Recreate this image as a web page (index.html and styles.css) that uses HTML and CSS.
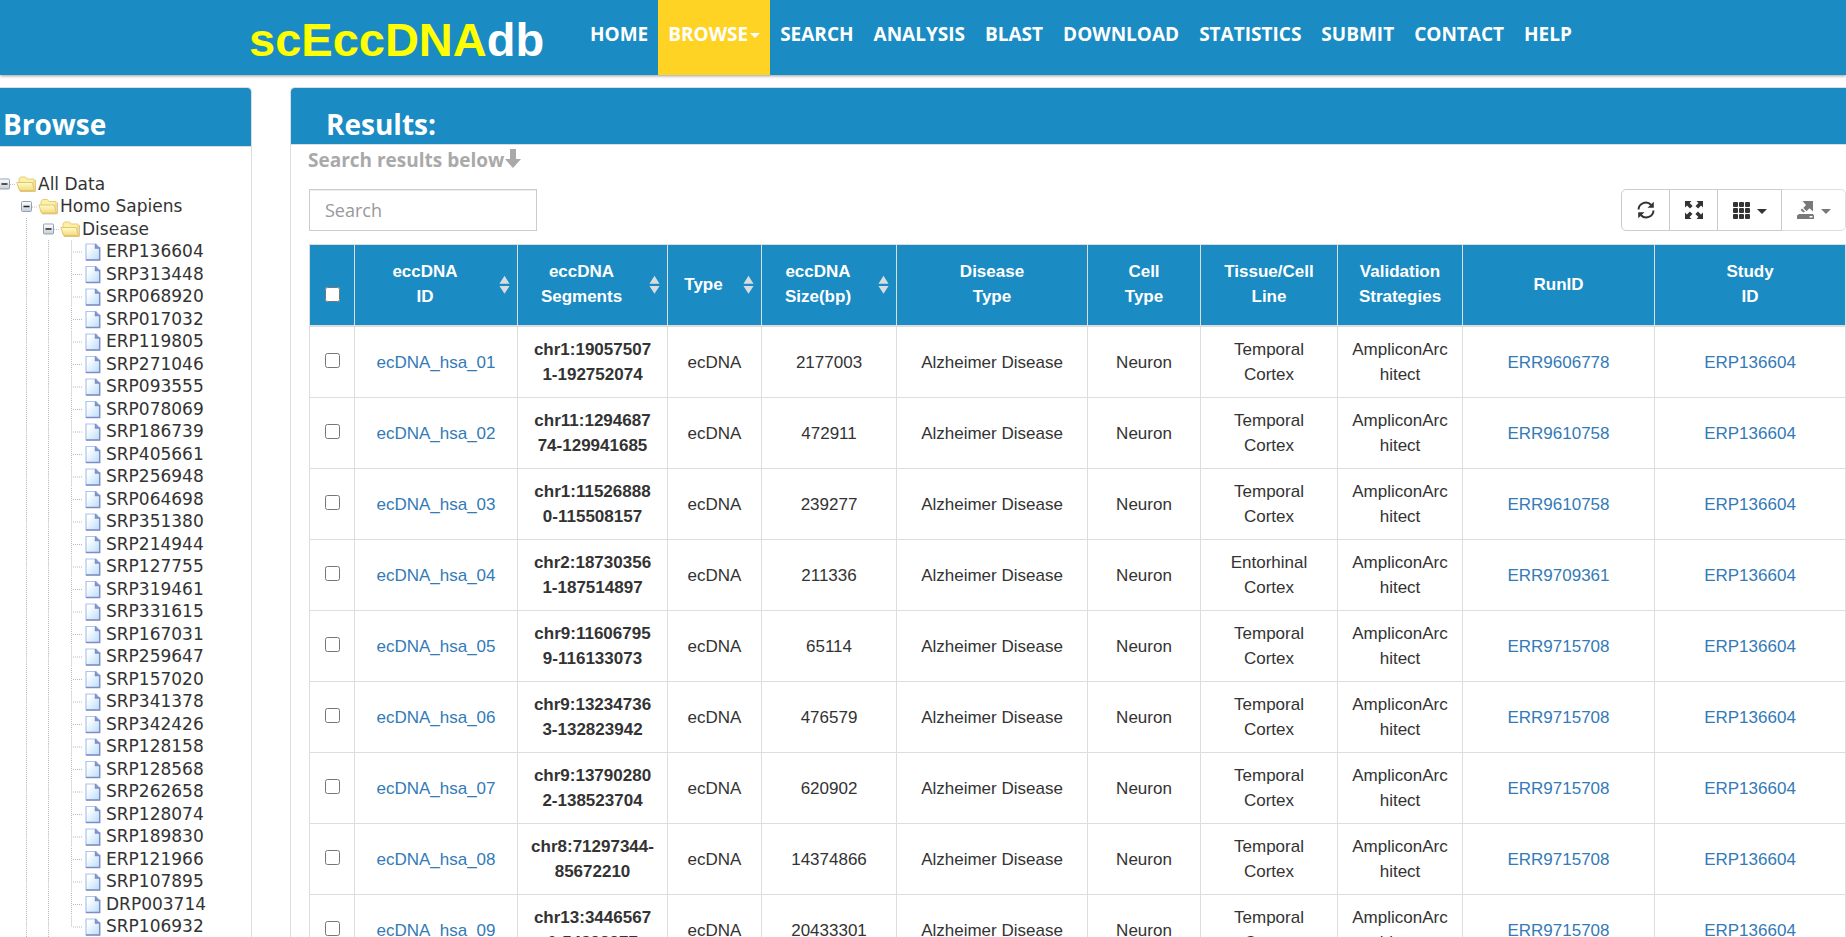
FILE: index.html
```html
<!DOCTYPE html>
<html lang="en">
<head>
    <meta charset="UTF-8">
    <meta name="viewport" content="width=device-width, initial-scale=1.0">
    <title>scEccDNAdb - Browse</title>
    <link rel="stylesheet" href="styles.css">
</head>
<body>
    <!-- icon definitions -->
    <svg class="sprite" aria-hidden="true">
        <defs>
            <linearGradient id="paper" x1="0" y1="0" x2="1" y2="1">
                <stop offset="0.2" stop-color="#ffffff"/>
                <stop offset="1" stop-color="#b9dcfb"/>
            </linearGradient>
            <linearGradient id="gold" x1="0" y1="0" x2="0" y2="1">
                <stop offset="0" stop-color="#fffbd0"/>
                <stop offset="1" stop-color="#f3dc78"/>
            </linearGradient>
            <linearGradient id="steel" x1="0" y1="0" x2="0" y2="1">
                <stop offset="0" stop-color="#ffffff"/>
                <stop offset="1" stop-color="#c9cdd2"/>
            </linearGradient>
        </defs>
        <symbol id="i-minus" viewBox="0 0 22 22">
            <path d="M16 11.5h6" stroke="#c4c4c4" stroke-dasharray="1 1"/>
            <rect x="5.5" y="6" width="10" height="10" rx="1" fill="url(#steel)" stroke="#8ea3ba"/>
            <path d="M7.500 11h6" stroke="#222" stroke-width="1.500"/>
        </symbol>
        <symbol id="i-folder" viewBox="0 0 22 22">
            <path d="M3 16V6l1.500-2h5l1.500 2h7v11H4z" fill="#fbf0a4" stroke="#e6cd78"/>
            <path d="M.8 9.500h15.500l2 8H3.500z" fill="url(#gold)" stroke="#e3c76e"/>
            <path d="M19.300 7v11.300H4" fill="none" stroke="#d6b866"/>
        </symbol>
        <symbol id="i-file" viewBox="0 0 22 22">
            <path d="M4 3.500h10l3.500 4v12H4z" fill="url(#paper)" stroke="#a9c4ee" stroke-width="1.200"/>
            <path d="M13.500 3.500v4h4.200v12H4" fill="none" stroke="#7f8cc0" stroke-width="1.400"/>
            <path d="M13.500 3.500l4 4h-4z" fill="#7f93cf"/>
        </symbol>
        <symbol id="i-line" viewBox="0 0 22 22" preserveAspectRatio="none">
            <path d="M10.500 0v22" stroke="#b8b8b8" stroke-dasharray="1 1"/>
        </symbol>
        <symbol id="i-join" viewBox="0 0 22 22">
            <path d="M11.500 0v22M13 11.500h9" stroke="#b8b8b8" stroke-dasharray="1 1"/>
        </symbol>
        <symbol id="i-joinbottom" viewBox="0 0 22 22">
            <path d="M11.500 0v11M13 11.500h9" stroke="#b8b8b8" stroke-dasharray="1 1"/>
        </symbol>
        <symbol id="i-sort" viewBox="0 0 12 20">
            <path d="M6 0l5.500 8.500H.5zM6 19.500L.5 11h11z" fill="#d9dde0"/>
        </symbol>
    </svg>

    <header class="navbar">
        <a class="logo" href="#">scEccDNA<span>db</span></a>
        <nav class="menu">
            <a href="#">HOME</a>
            <a href="#" class="active">BROWSE<i class="caret"></i></a>
            <a href="#">SEARCH</a>
            <a href="#">ANALYSIS</a>
            <a href="#">BLAST</a>
            <a href="#">DOWNLOAD</a>
            <a href="#">STATISTICS</a>
            <a href="#">SUBMIT</a>
            <a href="#">CONTACT</a>
            <a href="#">HELP</a>
        </nav>
    </header>

    <main class="content">
        <aside class="panel sidebar">
            <h2 class="panel-heading">Browse</h2>
            <div class="tree" id="tree"></div>
        </aside>

        <section class="panel results">
            <h2 class="panel-heading">Results:</h2>
            <div class="panel-body">
                <h4 class="hint">Search results below<svg width="16" height="20" viewBox="0 0 16 20"><path d="M5 0h6v10h5L8 19 0 10h5z" fill="#a9a9a9"/></svg></h4>
                <div class="toolbar">
                    <input type="text" class="search" placeholder="Search" aria-label="Search">
                    <div class="btn-group">
                        <button class="btn" title="Refresh">
                            <svg width="18" height="18" viewBox="0 0 18 18"><path d="M1.500 8.500A7.300 7.300 0 0 1 14 3.800M16.500 9.500A7.300 7.300 0 0 1 4 14.200" fill="none" stroke="#333" stroke-width="2"/><path d="M16.800.8v6h-6.300zM1.200 17.200v-6h6.300z" fill="#333"/></svg>
                        </button>
                        <button class="btn" title="Fullscreen">
                            <svg width="18" height="18" viewBox="0 0 18 18"><path d="M0 0h6.500L4.600 1.900l3 3L5 7.500l-3-3-2 2zM18 0v6.500l-1.900-1.900-3 3L10.500 5l3-3-2-2zM0 18v-6.500l1.900 1.900 3-3L7.500 13l-3 3 2 2zM18 18h-6.500l1.900-1.900-3-3 2.600-2.600 3 3 2-2z" fill="#333"/></svg>
                        </button>
                        <button class="btn" title="Columns">
                            <svg width="18" height="18" viewBox="0 0 18 18"><g fill="#333"><rect x="0" y="1" width="5" height="5" rx="1"/><rect x="6" y="1" width="5" height="5" rx="1"/><rect x="12" y="1" width="5" height="5" rx="1"/><rect x="0" y="7" width="5" height="5" rx="1"/><rect x="6" y="7" width="5" height="5" rx="1"/><rect x="12" y="7" width="5" height="5" rx="1"/><rect x="0" y="13" width="5" height="5" rx="1"/><rect x="6" y="13" width="5" height="5" rx="1"/><rect x="12" y="13" width="5" height="5" rx="1"/></g></svg>
                            <i class="caret"></i>
                        </button>
                        <button class="btn" title="Export data" disabled>
                            <svg width="18" height="18" viewBox="0 0 18 18"><path d="M5.500 0H16v10.500l-3.500-3.300-3 3L6.300 7 9 4zM5 7.500l3 3L6.500 11.500 3.500 9zM2 13h14l1 1.500V18H0v-3.500zm10.500 2v1.500h3V15z" fill="#333" fill-rule="evenodd"/></svg>
                            <i class="caret"></i>
                        </button>
                    </div>
                </div>

                <table class="table">
                    <colgroup>
                        <col class="w-check"><col class="w-id"><col class="w-seg"><col class="w-type"><col class="w-size"><col class="w-disease"><col class="w-cell"><col class="w-tissue"><col class="w-valid"><col class="w-run"><col class="w-study">
                    </colgroup>
                    <thead>
                        <tr>
                            <th class="check"><input type="checkbox" aria-label="Select all"></th>
                            <th class="sortable">eccDNA<br>ID<svg><use href="#i-sort"/></svg></th>
                            <th class="sortable">eccDNA<br>Segments<svg><use href="#i-sort"/></svg></th>
                            <th class="sortable">Type<svg><use href="#i-sort"/></svg></th>
                            <th class="sortable">eccDNA<br>Size(bp)<svg><use href="#i-sort"/></svg></th>
                            <th>Disease<br>Type</th>
                            <th>Cell<br>Type</th>
                            <th>Tissue/Cell<br>Line</th>
                            <th>Validation<br>Strategies</th>
                            <th>RunID</th>
                            <th>Study<br>ID</th>
                        </tr>
                    </thead>
                    <tbody id="rows"></tbody>
                </table>
            </div>
        </section>
    </main>

    <script src="browse.js"></script>
</body>
</html>
```
FILE: styles.css
```css
* {
    box-sizing: border-box;
}

body {
    margin: 0;
    height: 100vh;
    overflow: hidden;
    display: flex;
    flex-direction: column;
    background: #fff;
    color: #333;
    font-family: "Segoe UI", "Open Sans", "Noto Sans", sans-serif;
    font-size: 17px;
    line-height: 25px;
}

a {
    color: #337ab7;
    text-decoration: none;
}

.sprite {
    position: absolute;
    width: 0;
    height: 0;
}

/* navbar */
.navbar {
    flex: none;
    display: flex;
    height: 75px;
    padding-left: 249px;
    background: #1a8bc3;
    box-shadow: 0 1px 3px rgba(0, 0, 0, 0.4);
}

.logo {
    width: 331px;
    padding-top: 13px;
    color: #ff0;
    font: bold 47px/54px "Liberation Sans", Arial, sans-serif;
}

.logo span {
    color: #fff;
}

.menu {
    display: flex;
}

.menu a {
    padding: 22px 10px 0;
    color: #fff;
    font-size: 19px;
    font-weight: bold;
    white-space: nowrap;
}

.menu .active {
    background: #ffd324;
}

.caret {
    display: inline-block;
    border: 5px solid transparent;
    border-top-color: currentColor;
    border-bottom: 0;
    vertical-align: middle;
}

.menu .caret {
    margin-left: 2px;
}

/* panels */
.content {
    flex: 1;
    min-height: 0;
    display: flex;
    gap: 38px;
    padding-top: 12px;
}

.panel {
    border: 1px solid #ddd;
    border-width: 1px 1px 0 0;
    border-radius: 0 5px 0 0;
    overflow: hidden;
}

.panel-heading {
    margin: 0;
    border-bottom: 1px solid #ddd;
    background: #1a8bc3;
    color: #fff;
    font-size: 28px;
    font-weight: bold;
    line-height: 38px;
}

.sidebar {
    flex: none;
    width: 252px;
}

.sidebar .panel-heading {
    padding: 17px 3px 3px;
}

.results {
    flex: 1;
    border-width: 1px 0 0 1px;
    border-radius: 5px 0 0 0;
}

.results .panel-heading {
    padding: 17px 35px 1px;
}

/* tree */
.tree {
    margin: 26px 0 0 -6px;
    font-family: Verdana, "DejaVu Sans", sans-serif;
    line-height: 22px;
}

.node {
    display: flex;
    height: 22px;
    white-space: nowrap;
}

.node:nth-child(even) {
    height: 23px;
}

.node svg,
.node .blank {
    flex: none;
    width: 22px;
    height: 100%;
}

.node a {
    color: #333;
}

.node .leaf {
    padding-left: 2px;
}

/* results */
.panel-body {
    padding: 3px 0 0 18px;
}

.hint {
    height: 25px;
    margin: 0 0 16px -1px;
    color: #a9a9a9;
    font-size: 19px;
    line-height: 25px;
}

.hint svg {
    margin-left: 1px;
    vertical-align: -2px;
}

.toolbar {
    display: flex;
    justify-content: space-between;
    margin-bottom: 13px;
}

.search {
    width: 228px;
    height: 42px;
    padding: 0 15px;
    border: 1px solid #ccc;
    box-shadow: inset 0 1px 1px rgba(0, 0, 0, 0.075);
    color: #555;
    font: 18px/25px "Segoe UI", "Open Sans", sans-serif;
}

.search::placeholder {
    color: #999;
}

.btn-group {
    display: flex;
}

.btn {
    display: flex;
    align-items: center;
    gap: 6px;
    height: 42px;
    margin-left: -1px;
    padding: 0 14px 0 15px;
    border: 1px solid #ccc;
    background: #fff;
    color: #333;
}

.btn:first-child {
    border-radius: 5px 0 0 5px;
}

.btn:last-child {
    border-radius: 0 5px 5px 0;
}

.btn:disabled {
    opacity: 0.65;
}

.btn .caret {
    margin-top: 3px;
}

.table {
    width: 100%;
    table-layout: fixed;
    border-collapse: collapse;
    font-family: Arial, "Liberation Sans", sans-serif;
    text-align: center;
}

.table th,
.table td {
    padding: 10px 11px;
    border: 1px solid #ddd;
    vertical-align: middle;
    overflow-wrap: break-word;
}

.table th {
    position: relative;
    padding: 14px 0 16px;
    border-bottom-width: 2px;
    background: #1a8bc3;
    color: #fff;
}

.table th.sortable {
    padding-right: 22px;
}

.sortable svg {
    position: absolute;
    top: calc(50% - 10px);
    right: 7px;
    width: 11px;
    height: 20px;
}

.table .check {
    padding-left: 0;
    padding-right: 0;
}

.check input {
    display: block;
    width: 15px;
    height: 15px;
    margin: 0 auto 4px;
}

th.check input {
    margin: 20px auto 0;
}

.table .seg {
    padding: 10px 12px;
    font-weight: bold;
}

.w-check { width: 45px; }
.w-id { width: 163px; }
.w-seg { width: 150px; }
.w-type { width: 94px; }
.w-size { width: 135px; }
.w-disease { width: 191px; }
.w-cell { width: 113px; }
.w-tissue { width: 137px; }
.w-valid { width: 125px; }
.w-run { width: 192px; }
.w-study { width: 191px; }
```
FILE: browse.js
```js
const studies = [
    'ERP136604', 'SRP313448', 'SRP068920', 'SRP017032', 'ERP119805', 'SRP271046', 'SRP093555', 'SRP078069',
    'SRP186739', 'SRP405661', 'SRP256948', 'SRP064698', 'SRP351380', 'SRP214944', 'SRP127755', 'SRP319461',
    'SRP331615', 'SRP167031', 'SRP259647', 'SRP157020', 'SRP341378', 'SRP342426', 'SRP128158', 'SRP128568',
    'SRP262658', 'SRP128074', 'SRP189830', 'ERP121966', 'SRP107895', 'DRP003714', 'SRP106932'
];

const records = [
    ['ecDNA_hsa_01', 'chr1:190575071-192752074', '2177003', 'Temporal', 'ERR9606778'],
    ['ecDNA_hsa_02', 'chr11:129468774-129941685', '472911', 'Temporal', 'ERR9610758'],
    ['ecDNA_hsa_03', 'chr1:115268880-115508157', '239277', 'Temporal', 'ERR9610758'],
    ['ecDNA_hsa_04', 'chr2:187303561-187514897', '211336', 'Entorhinal', 'ERR9709361'],
    ['ecDNA_hsa_05', 'chr9:116067959-116133073', '65114', 'Temporal', 'ERR9715708'],
    ['ecDNA_hsa_06', 'chr9:132347363-132823942', '476579', 'Temporal', 'ERR9715708'],
    ['ecDNA_hsa_07', 'chr9:137902802-138523704', '620902', 'Temporal', 'ERR9715708'],
    ['ecDNA_hsa_08', 'chr8:71297344-85672210', '14374866', 'Temporal', 'ERR9715708'],
    ['ecDNA_hsa_09', 'chr13:34465676-54898977', '20433301', 'Temporal', 'ERR9715708']
];

// one tree line: indent icons followed by the label
function node(icons, label, cls) {
    const cells = icons.map(name => name
        ? `<svg><use href="#i-${name}"/></svg>`
        : '<span class="blank"></span>').join('');
    return `<div class="node">${cells}<a href="#" class="${cls}">${label}</a></div>`;
}

document.getElementById('tree').innerHTML =
    node(['minus', 'folder'], 'All Data', 'branch') +
    node(['', 'minus', 'folder'], 'Homo Sapiens', 'branch') +
    node(['', 'line', 'minus', 'folder'], 'Disease', 'branch') +
    studies.map((id, i) => {
        const join = i === studies.length - 1 ? 'joinbottom' : 'join';
        return node(['', 'line', 'line', join, 'file'], id, 'leaf');
    }).join('');

document.getElementById('rows').innerHTML = records.map(([id, seg, size, tissue, run]) => `
    <tr>
        <td class="check"><input type="checkbox" aria-label="${id}"></td>
        <td><a href="#">${id}</a></td>
        <td class="seg">${seg}</td>
        <td>ecDNA</td>
        <td>${size}</td>
        <td>Alzheimer Disease</td>
        <td>Neuron</td>
        <td>${tissue} Cortex</td>
        <td>AmpliconArchitect</td>
        <td><a href="#">${run}</a></td>
        <td><a href="#">ERP136604</a></td>
    </tr>`).join('');
```
